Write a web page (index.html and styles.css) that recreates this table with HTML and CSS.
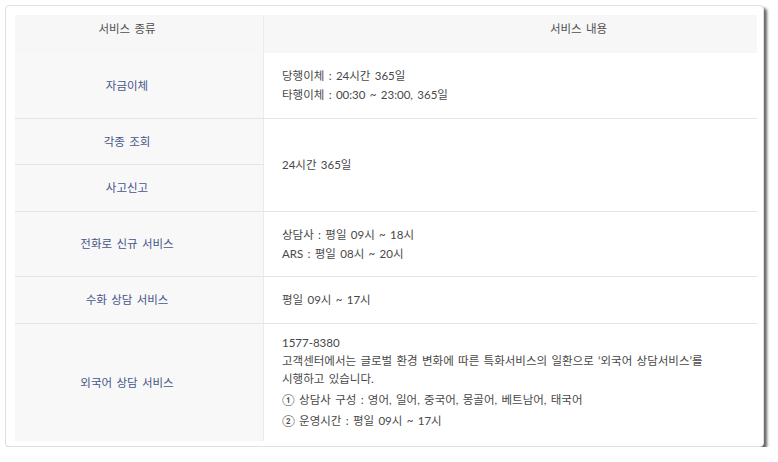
FILE: index.html
```html
<!DOCTYPE html>
<html lang="ko">
<head>
<meta charset="utf-8">
<title>서비스 안내</title>
<link rel="stylesheet" href="styles.css">
</head>
<body>
<div class="card">
  <table class="svc">
    <thead>
      <tr class="r-head">
        <th class="kind">서비스 종류</th>
        <th class="desc">서비스 내용</th>
      </tr>
    </thead>
    <tbody>
      <tr class="r-transfer">
        <th>자금이체</th>
        <td>당행이체 : 24시간 365일<br>타행이체 : 00:30 ~ 23:00, 365일</td>
      </tr>
      <tr class="r-inquiry">
        <th>각종 조회</th>
        <td rowspan="2">24시간 365일</td>
      </tr>
      <tr class="r-accident">
        <th>사고신고</th>
      </tr>
      <tr class="r-phone">
        <th>전화로 신규 서비스</th>
        <td>상담사 : 평일 09시 ~ 18시<br>ARS : 평일 08시 ~ 20시</td>
      </tr>
      <tr class="r-sign">
        <th>수화 상담 서비스</th>
        <td>평일 09시 ~ 17시</td>
      </tr>
      <tr class="r-foreign">
        <th>외국어 상담 서비스</th>
        <td>
          <p class="para">1577-8380<br>고객센터에서는 글로벌 환경 변화에 따른 특화서비스의 일환으로 ‘외국어 상담서비스’를<br>시행하고 있습니다.</p>
          <p class="item">① 상담사 구성 : 영어, 일어, 중국어, 몽골어, 베트남어, 태국어</p>
          <p class="item">② 운영시간 : 평일 09시 ~ 17시</p>
        </td>
      </tr>
    </tbody>
  </table>
</div>
</body>
</html>
```

FILE: styles.css
```css
html, body {
  margin: 0;
  padding: 0;
  background: #ffffff;
}

body {
  padding: 5px 0 0 5px;
  font-family: Lato, "Noto Sans CJK KR", sans-serif;
  font-size: 11.5px;
  word-spacing: 1.4px;
}

.card {
  box-sizing: border-box;
  width: 759px;
  height: 442px;
  padding: 9px 6px 5px 9px;
  background: #ffffff;
  border: 1px solid #e0e0e0;
  border-radius: 4px;
  box-shadow: 3px 3px 3px rgba(0, 0, 0, 0.6);
}

.svc {
  width: 742px;
  border-collapse: collapse;
  table-layout: fixed;
}

.svc th,
.svc td {
  padding: 0;
  line-height: 19px;
  border-bottom: 1px solid #e4e4e4;
  font-weight: normal;
}

.svc tr:last-child th,
.svc tr:last-child td {
  border-bottom: none;
}

.svc tbody th {
  width: 248px;
  background: #f8f8f8;
  color: #47558a;
  text-align: center;
  padding-right: 24px;
  border-right: 1px solid #ebebeb;
  vertical-align: middle;
}

.svc tbody td {
  color: #484848;
  text-align: left;
  padding-left: 18px;
  vertical-align: middle;
}

.svc thead th {
  background: #f7f7f7;
  color: #505050;
  vertical-align: top;
  padding-top: 4px;
  text-align: center;
}

.svc thead th.kind {
  width: 224px;
  padding-right: 24px;
  border-right: 1px solid #ebebeb;
}

.svc thead th.desc {
  padding-left: 136px;
}

.r-head { height: 38px; }
.r-transfer { height: 65px; }
.r-inquiry { height: 46px; }
.r-accident { height: 47px; }
.r-phone { height: 65px; }
.r-sign { height: 47px; }
.r-foreign { height: 118px; }

.para {
  margin: 0;
  line-height: 18px;
}

.item {
  margin: 2px 0 0;
  line-height: 19px;
}
```
